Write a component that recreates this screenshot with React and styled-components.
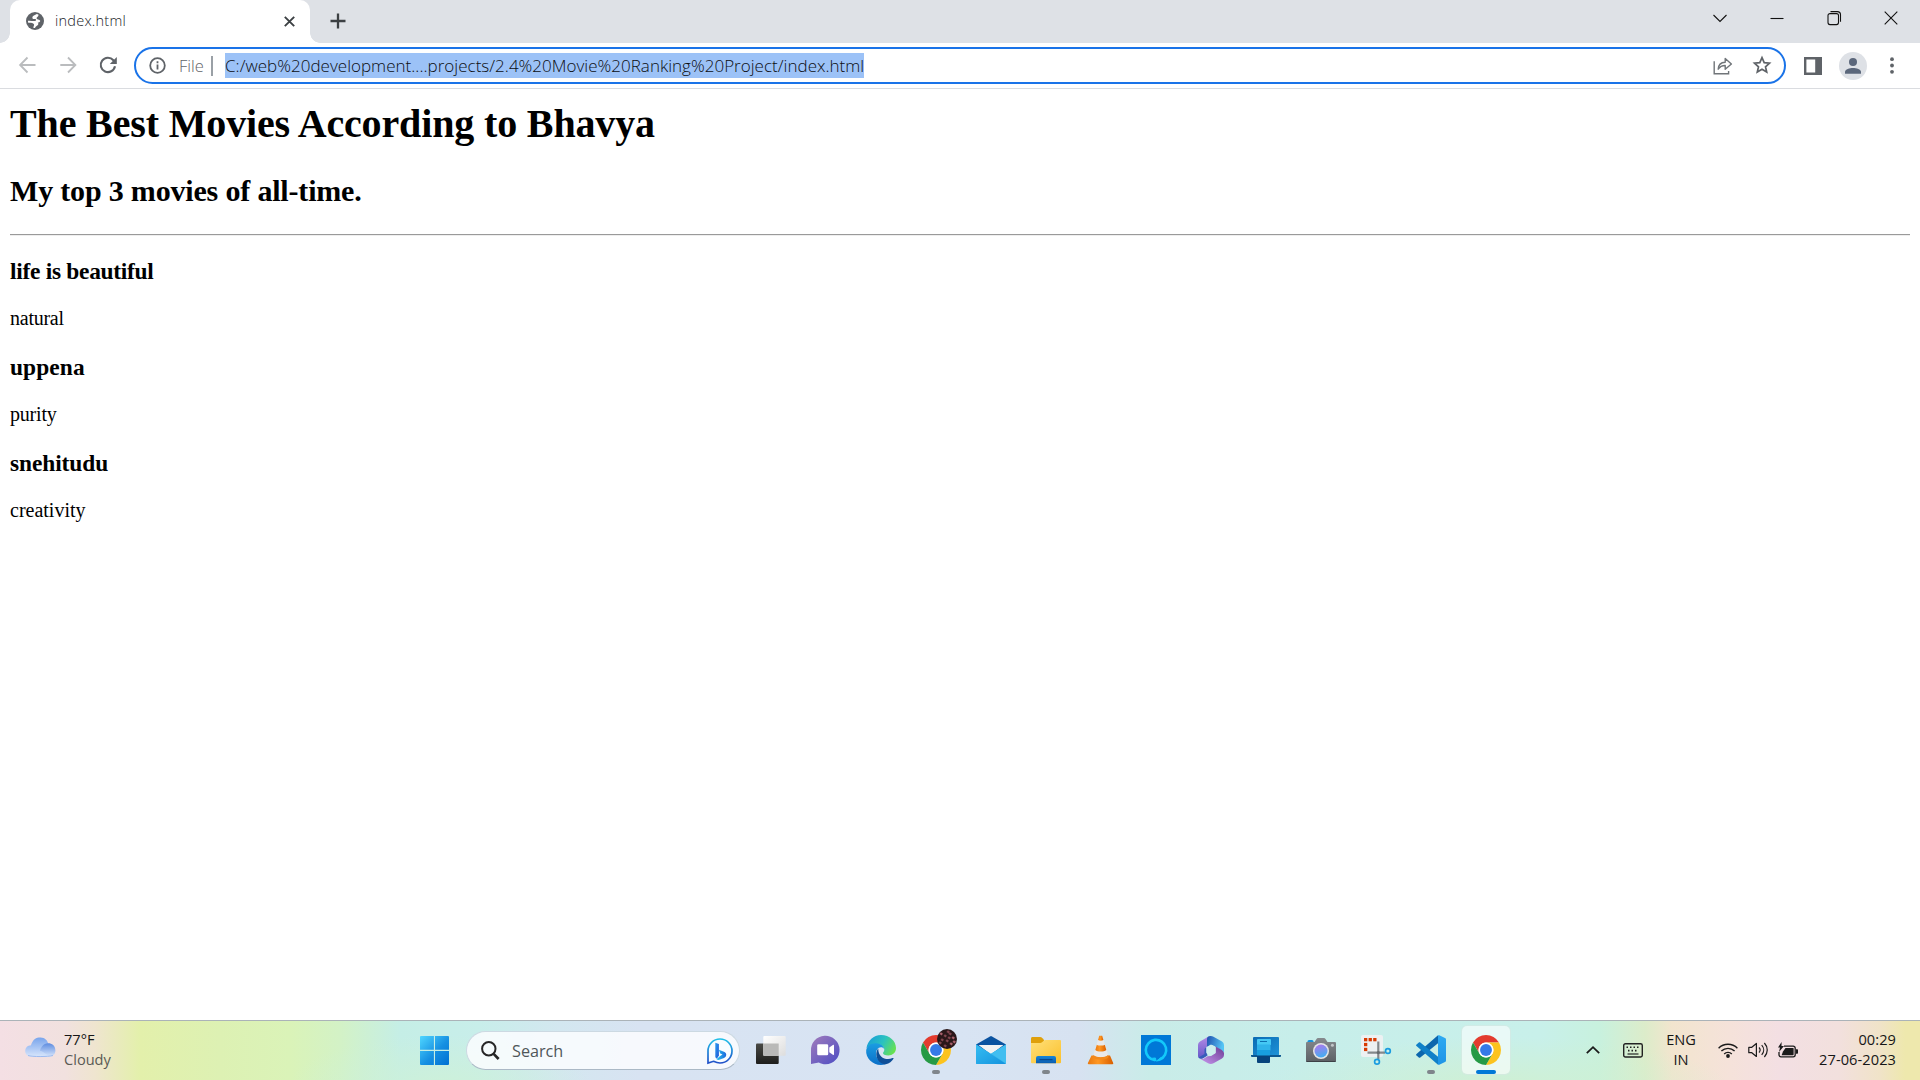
import React from "react";
import styled, { createGlobalStyle } from "styled-components";

const GlobalStyle = createGlobalStyle`
  * { box-sizing: border-box; }
  html, body { margin: 0; padding: 0; background: #fff; }
  body { overflow: hidden; }
  svg { display: block; flex: none; overflow: visible; }
`;

const UI_FONT = `"Open Sans", "Noto Sans", sans-serif`;

const Desktop = styled.div`
  width: 1920px;
  height: 1080px;
  display: flex;
  flex-direction: column;
  background: #fff;
  font-family: ${UI_FONT};
`;

/* ---------- browser chrome ---------- */

const TabStrip = styled.div`
  height: 43px;
  flex: none;
  display: flex;
  padding-left: 10px;
  background: #dee1e6;
`;

const Tab = styled.div`
  position: relative;
  width: 300px;
  height: 43px;
  display: flex;
  align-items: center;
  padding: 0 15px 1px 16px;
  background: #fff;
  border-radius: 10px 10px 0 0;
  &::before, &::after {
    content: "";
    position: absolute;
    bottom: 0;
    width: 10px;
    height: 10px;
  }
  &::before { left: -10px; background: radial-gradient(circle at 0 0, transparent 9.5px, #fff 10px); }
  &::after { right: -10px; background: radial-gradient(circle at 100% 0, transparent 9.5px, #fff 10px); }
`;

const TabTitle = styled.span`
  flex: 1;
  margin-left: 11px;
  font-size: 14.5px;
  font-weight: 300;
  line-height: 20px;
  letter-spacing: 0.24px;
  color: #202328;
`;

const NewTab = styled.div`
  display: flex;
  align-items: center;
  padding: 0 0 1px 19.5px;
`;

const WindowControls = styled.div`
  display: flex;
  margin-left: auto;
  padding-right: 1px;
  height: 36px;
`;

const WindowButton = styled.div`
  width: 57px;
  display: grid;
  place-items: center;
`;

const Toolbar = styled.div`
  height: 46px;
  flex: none;
  display: flex;
  align-items: center;
  padding: 0 18px;
  border-bottom: 1px solid #dadce0;
  background: #fff;
`;

const NavGroup = styled.div`
  display: flex;
  gap: 22.5px;
  width: 116px;
  padding-bottom: 1px;
`;

const Omnibox = styled.div`
  width: 1652px;
  height: 37px;
  display: flex;
  align-items: center;
  padding: 0 13px;
  border: 2px solid #1a73e8;
  border-radius: 19px;
  background: #fff;
`;

const Scheme = styled.span`
  width: 32px;
  margin-left: 13px;
  font-size: 16.5px;
  font-weight: 300;
  line-height: 24px;
  white-space: nowrap;
  color: #5f6368;
`;

const Divider = styled.span`
  width: 2px;
  height: 20px;
  margin-right: 12px;
  background: #9aa0a6;
`;

const Url = styled.span`
  width: 639px;
  height: 25px;
  font-size: 17px;
  font-weight: 300;
  line-height: 25px;
  letter-spacing: ${(p) => p.$track}px;
  white-space: nowrap;
  color: #0c0e12;
  background: #9cc2f7;
`;

const OmniActions = styled.div`
  display: flex;
  gap: 20px;
  margin-left: auto;
`;

const ToolbarActions = styled.div`
  display: flex;
  align-items: center;
  margin-left: 18px;
`;

const Avatar = styled.div`
  width: 28px;
  height: 28px;
  display: grid;
  place-items: center;
  margin: 0 23px 0 17px;
  border-radius: 50%;
  background: #dee1e6;
`;

/* ---------- document ---------- */

const Page = styled.main`
  flex: 1;
  padding: 12px 10px 0;
  font-family: "Liberation Serif", "Times New Roman", serif;
  color: #000;
`;

const Title = styled.h1`
  margin: 0;
  font-size: 40px;
  line-height: 46px;
  letter-spacing: -0.145px;
`;

const Subtitle = styled.h2`
  margin: 27px 0 26px;
  font-size: 30px;
  line-height: 34px;
  letter-spacing: -0.18px;
`;

const Rule = styled.hr`
  height: 2px;
  margin: 0 0 21px;
  border: 0;
  border-top: 1px solid #9a9a9a;
  border-bottom: 1px solid #eeeeee;
`;

const Movie = styled.h3`
  margin: 0 0 22px;
  font-size: 23.4px;
  line-height: 28px;
  letter-spacing: ${(p) => p.$track || 0}px;
`;

const Note = styled.p`
  margin: 0 0 23px;
  font-size: 20px;
  line-height: 23px;
  letter-spacing: ${(p) => p.$track || 0}px;
`;

/* ---------- taskbar ---------- */

const Taskbar = styled.footer`
  height: 60px;
  flex: none;
  display: flex;
  padding-top: 5px;
  border-top: 1px solid #abb3b8;
  background:
    radial-gradient(ellipse 150px 50px at 440px 64px, rgba(206, 241, 215, 0.85), rgba(206, 241, 215, 0)),
    radial-gradient(ellipse 230px 50px at 1500px 66px, rgba(208, 240, 208, 0.9), rgba(208, 240, 208, 0)),
    linear-gradient(90deg,
      #f4dfe4 0px, #f1e1df 65px, #efe5cf 95px, #e3f0ab 140px, #ddf1b3 220px, #daf3b8 290px,
      #d3f2c6 340px, #c5eee6 400px, #c8eeea 480px, #d3e7f0 560px, #d8e3f2 640px, #d8e4f3 960px,
      #d7e2f1 1080px, #c9ece8 1150px, #c7eeea 1300px, #c8f0ea 1540px, #c8f1de 1600px,
      #dcecca 1645px, #f2e5ce 1672px, #f5e2da 1730px, #f3dfe3 1780px, #f2e0dd 1840px, #f0e3c8 1880px, #eee8ad 1905px, #eee8ad 1920px);
`;

const Weather = styled.div`
  width: 411px;
  display: flex;
  padding: 0 0 0 25px;
  gap: 8px;
`;

const WeatherIcon = styled.div`
  padding-top: 11px;
`;

const StackText = styled.div`
  display: flex;
  flex-direction: column;
  align-items: ${(p) => p.$align || "flex-start"};
  padding-top: 3px;
  font-size: 14.6px;
  line-height: 20px;
  letter-spacing: ${(p) => p.$track || 0}px;
  color: #161616;
  white-space: nowrap;
`;

const Muted = styled.span`
  color: #5b5b55;
`;

const AppRow = styled.div`
  display: flex;
  gap: 7px;
`;

const Slot = styled.div`
  position: relative;
  width: 48px;
  height: 48px;
  display: grid;
  place-items: center;
  border-radius: 5px;
  background: ${(p) => (p.$active ? "rgba(255,255,255,0.6)" : "transparent")};
  box-shadow: ${(p) => (p.$active ? "0 0 0 1px rgba(215,232,226,0.6)" : "none")};
  &::after {
    content: "";
    position: absolute;
    bottom: 0;
    left: 50%;
    width: ${(p) => (p.$active ? 20 : 8)}px;
    height: 4px;
    transform: translateX(-50%);
    border-radius: 2px;
    background: ${(p) => (p.$active ? "#0078d7" : p.$running ? "#7f858b" : "transparent")};
  }
`;

const SearchBox = styled.div`
  width: 274px;
  height: 39px;
  display: flex;
  align-items: center;
  margin-top: 5px;
  padding: 0 6px 0 14px;
  border: 1px solid #ccd9e2;
  border-bottom-color: #abb9c6;
  border-radius: 20px;
  background: rgba(251, 253, 255, 0.86);
`;

const SearchLabel = styled.span`
  flex: 1;
  margin-left: 12px;
  font-size: 16.2px;
  line-height: 24px;
  color: #4f5659;
`;

const Tray = styled.div`
  display: flex;
  margin-left: auto;
  padding-right: 24px;
`;

const TrayIcon = styled.div`
  width: ${(p) => p.$w}px;
  height: 48px;
  display: grid;
  place-items: center;
`;

const Lang = styled.div`
  width: 56px;
  display: flex;
  justify-content: center;
`;

const Clock = styled.div`
  width: 89px;
  display: flex;
  justify-content: flex-end;
`;

/* ---------- icons ---------- */

const Icon30 = ({ children }) => (
  <svg width="30" height="30" viewBox="0 0 30 30" fill="none">{children}</svg>
);

const Grad = ({ id, from, to, x2 = 1, y2 = 1 }) => (
  <linearGradient id={id} x1="0" y1="0" x2={x2} y2={y2}>
    <stop stopColor={from} />
    <stop offset="1" stopColor={to} />
  </linearGradient>
);

const Globe = () => (
  <svg width="18" height="18" viewBox="0 0 18 18">
    <circle cx="9" cy="9" r="9" fill="#5f6368" />
    <path d="M10.800 2.100c-1.800 1.100-4.300 1.500-4.500 3.600-.1 1.500 1.700 1.200 2.800 1.300 1.500.2 1.200 1.700.1 2-1.700.3-4.200-.5-7.200-.3a7.100 7.100 0 0 0 .2 2c2.400-.2 4.700.1 5.600 1.300.8 1.200-.3 2-.5 3.800.5.200 1.200.3 1.700.3.700-1.600 1.200-2.100 2.300-2.600 1.400-.7 1.300-1.900.4-2.900 1.400-.1 2.700-.6 2.500-1.800-.2-1.300-2.100-1.100-3.200-1.900-.8-.7-.3-1.600.6-2.200.7-.5 1-1.300.800-2.200a6 6 0 0 0-1.600-.4z" fill="#fff" />
  </svg>
);

const TabClose = () => (
  <svg width="11" height="11" viewBox="0 0 11 11" stroke="#3c4043" strokeWidth="1.900">
    <path d="M.8.8l9.400 9.400M10.200.8L.8 10.200" />
  </svg>
);

const Plus = () => (
  <svg width="16" height="16" viewBox="0 0 16 16" stroke="#3c4043" strokeWidth="2.300">
    <path d="M8 .5v15M.5 8h15" />
  </svg>
);

const Arrow = ({ flip }) => (
  <svg width="18" height="18" viewBox="0 0 18 18" fill="none" stroke="#babcbe" strokeWidth="1.800">
    <path d={flip ? "M1.300 9h15M9 1.500L16.400 9 9 16.500" : "M17.500 9H2.500M9.500 1.500L2.100 9 9.500 16.500"} />
  </svg>
);

const Reload = () => (
  <svg width="18" height="18" viewBox="0 0 18 18" fill="none" stroke="#5f6368" strokeWidth="2.100">
    <path d="M16 10.300A7.200 7.200 0 1 1 14.400 4.200L16 5.800" />
    <path d="M17.800 1v7h-7z" fill="#5f6368" stroke="none" />
  </svg>
);

const Info = () => (
  <svg width="17" height="17" viewBox="0 0 17 17" fill="none" stroke="#5f6368" strokeWidth="1.800">
    <circle cx="8.500" cy="8.500" r="7.300" />
    <path d="M8.500 7.600v5M8.500 4.300v1.900" />
  </svg>
);

const Share = () => (
  <svg width="20" height="19" viewBox="0 0 20 19" fill="none" stroke="#707579" strokeWidth="1.400">
    <path d="M1.200 5.200v12.600h14.400V15" />
    <path d="M5.200 13.200c.2-4.400 2.800-6.700 7-6.900V2.400L18.400 8l-6.200 5.300V9.500c-3.200 0-5.200.9-7 3.700z" strokeLinejoin="round" />
  </svg>
);

const Star = () => (
  <svg width="18" height="18" viewBox="0 0 18 18" fill="none" stroke="#5f6368" strokeWidth="1.700">
    <path d="M9 1.700l2.200 5 5.300.5-4 3.600 1.200 5.300L9 13.300l-4.700 2.800 1.200-5.300-4-3.600 5.300-.5z" />
  </svg>
);

const SidePanel = () => (
  <svg width="18" height="18" viewBox="0 0 18 18">
    <rect width="18" height="18" fill="#5f6368" />
    <rect x="2.400" y="2.500" width="8.800" height="13" fill="#fff" />
  </svg>
);

const Person = () => (
  <svg width="16" height="16" viewBox="0 0 16 16" fill="#5b677b">
    <circle cx="8" cy="4" r="4" />
    <path d="M0 15.700v-1.600C0 11.300 4.600 10 8 10s8 1.300 8 4.100v1.600z" />
  </svg>
);

const Kebab = () => (
  <svg width="4" height="17" viewBox="0 0 4 17" fill="#5f6368">
    <circle cx="2" cy="2.200" r="1.900" />
    <circle cx="2" cy="8.500" r="1.900" />
    <circle cx="2" cy="14.800" r="1.900" />
  </svg>
);

const WinGlyph = ({ d }) => (
  <svg width="14" height="14" viewBox="0 0 14 14" fill="none" stroke="#111" strokeWidth="1.100">
    <path d={d} />
  </svg>
);

const Cloud = () => (
  <svg width="31" height="20" viewBox="0 0 31 20">
    <defs>
      <Grad id="cl1" from="#78a4ec" to="#d2e1fa" x2={0} />
      <Grad id="cl2" from="#5f8de0" to="#d7e5fb" x2={0} />
      <Grad id="cl3" from="#9dbdf2" to="#d7e5fb" x2={0} />
    </defs>
    <path d="M6 8C8 2 11 .4 15.500.4c4.500 0 7.500 3 8 8V19H6z" fill="url(#cl1)" />
    <path d="M15 19c-1-3 0-7 2-9.500 4-5.500 13.400-3.500 13.400 4 0 3.500-2.400 6-5.900 6z" fill="url(#cl2)" />
    <path d="M6 19.500c-7.600 0-7.800-11.200.2-11.300 4.300 0 7.200 2 8.800 5.500 2 .3 5 2.500 9.500 5.800z" fill="url(#cl3)" />
    <path d="M3 18.500c4 1.400 20 1.400 25 0" stroke="#9dbbf0" fill="none" />
  </svg>
);

const WindowsLogo = () => (
  <Icon30>
    <defs><linearGradient id="win" gradientUnits="userSpaceOnUse" x1="0" y1="1" x2="29" y2="30"><stop stopColor="#4fd6ff" /><stop offset=".55" stopColor="#1690e2" /><stop offset="1" stopColor="#0070d2" /></linearGradient></defs>
    <path d="M1 1h12.900v13.800H0V2a1 1 0 0 1 1-1zM15 1h13a1 1 0 0 1 1 1v12.800H15zM0 16h13.900v14H1a1 1 0 0 1-1-1zM15 16h14v13a1 1 0 0 1-1 1H15z" fill="url(#win)" />
  </Icon30>
);

const Magnifier = () => (
  <svg width="19" height="19" viewBox="0 0 19 19" fill="none" stroke="#262626">
    <circle cx="7.800" cy="7.800" r="6.700" strokeWidth="2" />
    <path d="M12.600 12.800l5 5.200" strokeWidth="2.600" />
  </svg>
);

const Bing = () => (
  <svg width="26" height="26" viewBox="0 0 26 26" fill="none">
    <defs>
      <linearGradient id="bi1" x1="0" y1="0" x2="0" y2="1"><stop stopColor="#20c0e8" /><stop offset="1" stopColor="#204fc8" /></linearGradient>
      <Grad id="bi2" from="#2b9cf0" to="#1b54d4" />
      <Grad id="bi3" from="#25c6ee" to="#1c64dd" y2={0} />
    </defs>
    <path d="M1 25V13A12 12 0 1 1 13 25c-2.500 0-4.600-.8-6.500-1.700z" fill="#f8fcff" stroke="url(#bi1)" strokeWidth="1.700" />
    <path d="M8.300 4.800l3.600 1.300v11.500l-2 3.200-1.600-1.500z" fill="url(#bi2)" />
    <path d="M9.500 21.200l3.700-3.200 2.300-1.500-2.300-1.100-1.300-3.600 5.600 2.300c3 1.800 1.700 5-.5 6l-4 1.500c-1.500.5-2.700.3-3.500-.4z" fill="url(#bi3)" />
  </svg>
);

const TaskView = () => (
  <Icon30>
    <defs><Grad id="tv1" from="#494945" to="#1e1e1c" x2={0} /><Grad id="tv2" from="#ffffff" to="#dddddd" /></defs>
    <rect x="0" y="8.500" width="22.700" height="20.500" rx="1" fill="url(#tv1)" />
    <rect x="7.300" y="1" width="22.400" height="19.700" rx="1" fill="url(#tv2)" />
    <rect x="7.300" y="8.500" width="15.400" height="12.200" fill="#b9b9b8" />
  </Icon30>
);

const Chat = () => (
  <Icon30>
    <defs><Grad id="ch" from="#a27cbb" to="#4c4dc4" /></defs>
    <path d="M0 29V16A14.300 14.300 0 1 1 14.700 29.300c-2.700 0-4.900-.6-6.900-1.800L0 29z" fill="url(#ch)" />
    <rect x="6.200" y="9.300" width="11" height="11" rx="1.300" fill="#fff" />
    <path d="M18.300 12.500l3.600-2.600c.8-.5 1.100 0 1.100.6v8.700c0 .7-.4 1-1.100.6l-3.600-2.600z" fill="#fff" />
  </Icon30>
);

const Edge = () => (
  <Icon30>
    <defs>
      <linearGradient id="ed1" x1="0" y1=".3" x2="1" y2=".7"><stop stopColor="#1a9fd8" /><stop offset=".5" stopColor="#2bc2c0" /><stop offset="1" stopColor="#6be34a" /></linearGradient>
      <Grad id="ed2" from="#1b9de2" to="#0b6fc8" x2={0} />
      <Grad id="ed3" from="#0d4f94" to="#104f9a" />
    </defs>
    <path d="M.4 13.500C1.700 5.400 7.500 0 15 0c8.600 0 15 6.100 15 13 0 4.700-3.600 7.500-7.700 7.500-3.400 0-5.300-1.200-5.300-2.400 0-.7 1.300-1.300 1.300-3.500 0-3.100-3.300-5.700-7.600-5.700C6 8.900 2.100 11.300.4 13.500z" fill="url(#ed1)" />
    <path d="M.2 15C1 10.800 5.300 7.800 10.300 8.200c4.800.4 7.700 3.200 8 6-1.700-2.700-5.300-2.400-7.200.2-2.700 3.800-.6 10.200 4.700 13.100l3.800 1.700C9.500 32.500-.8 24.500.2 15z" fill="url(#ed2)" />
    <path d="M12.300 13.400c-4.700 5.400-.6 15.900 7.500 15.800 3.500-.7 6.200-3 7.700-5.500.4-.8-.2-1-1-.6-6 2.700-14.500-.3-14.200-9.700z" fill="url(#ed3)" />
  </Icon30>
);

const ChromeMark = () => (
  <g transform="scale(.625)">
    <path d="M24 12H44.780A24 24 0 0 0 3.220 12L13.610 30A12 12 0 0 1 24 12z" fill="#e33b2e" />
    <path d="M44.780 12H24A12 12 0 0 1 34.390 30L24 48A24 24 0 0 0 44.780 12z" fill="#fcc31e" />
    <path d="M13.610 30L3.220 12A24 24 0 0 0 24 48L34.390 30A12 12 0 0 1 13.610 30z" fill="#269a45" />
    <circle cx="24" cy="24" r="12" fill="#fff" />
    <circle cx="24" cy="24" r="9.500" fill="#357ae8" />
  </g>
);

const BLOSSOMS = [[20, -1], [24, 1], [29, -1], [32, 3], [21, 5], [26, 6], [30, 9], [24, 11], [19, 8], [33, 7], [27, -3], [28, 3]];

const Chrome = ({ profile }) => (
  <Icon30>
    <ChromeMark />
    {profile && (
      <g>
        <circle cx="26" cy="4" r="10" fill="#2a1719" />
        {BLOSSOMS.map(([x, y], i) => (
          <path key={i} d={`M${x - 1.6} ${y}l1.500-1.700 1.900 1.100-.9 2.100z`} fill={i % 3 ? "#80454f" : "#a8606b"} />
        ))}
      </g>
    )}
  </Icon30>
);

const Mail = () => (
  <Icon30>
    <defs><Grad id="ma1" from="#35bdf2" to="#1593de" /></defs>
    <path d="M0 9.500L14 1.400a2 2 0 0 1 2 0L30 9.500v9H0z" fill="#0b53a0" />
    <path d="M2.500 10h25L15 19.500z" fill="#f3f3f3" />
    <path d="M0 9.500l15 9.200 15-9.200V28a1 1 0 0 1-1 1H1a1 1 0 0 1-1-1z" fill="#2badea" />
    <path d="M0 9.500L30 29H1a1 1 0 0 1-1-1z" fill="url(#ma1)" />
    <path d="M15 18.700l15-9.200V28.500z" fill="#42bef0" />
  </Icon30>
);

const Explorer = () => (
  <Icon30>
    <defs><Grad id="fo1" from="#ffe07a" to="#fbc02c" /><Grad id="fo2" from="#1685d8" to="#0b5caf" x2={0} /></defs>
    <path d="M1.500 2h7.500c1 0 1.700.4 2.500 1.200L13 5v6H0V3.500C0 2.600.6 2 1.500 2z" fill="#dfa00c" />
    <path d="M0 8h8.500c1.200 0 2-.3 2.800-1L13 5.600c.4-.4.9-.6 1.500-.6H29a1 1 0 0 1 1 1v21.300a1 1 0 0 1-1 1H1a1 1 0 0 1-1-1z" fill="url(#fo1)" />
    <path d="M5 28.300V23a2 2 0 0 1 2-2h16a2 2 0 0 1 2 2v5.300z" fill="url(#fo2)" />
    <rect x="8.500" y="24.200" width="13" height="1" fill="#083f80" />
  </Icon30>
);

const Vlc = () => (
  <Icon30>
    <defs><linearGradient id="vl" x1="0" x2="1" y1="0" y2="0"><stop stopColor="#e87810" /><stop offset=".4" stopColor="#ff9822" /><stop offset="1" stopColor="#d95f00" /></linearGradient></defs>
    <path d="M5.500 20.500h18.500l3.200 7.500a.8.800 0 0 1-.8 1.200H2.700a.8.800 0 0 1-.8-1.200z" fill="url(#vl)" />
    <path d="M13 1.300h3.400L22 20c-1.200 3.200-13.200 3.200-14.500 0z" fill="#e9e9e9" />
    <path d="M13.200.8h3l1.200 4.200c-1.500.9-3.900.9-5.300 0z" fill="url(#vl)" />
    <path d="M10.800 9.700c2 1.200 6 1.200 8 0l1.500 5.200c-2.500 2.100-8.600 2.100-11 0z" fill="url(#vl)" />
    <path d="M7.600 20l-.6 2.200c1.500 3.200 13.800 3.200 15.500 0L22 20c-2.500 3-12 3-14.400 0z" fill="#f28a1c" />
  </Icon30>
);

const Alexa = () => (
  <Icon30>
    <rect width="30" height="30" fill="#0078d7" />
    <path d="M14.200 25.200C8.600 24.700 4.800 20.200 4.800 15a10.200 10.200 0 1 1 14 9.500" stroke="#13c9fa" strokeWidth="2.600" />
    <path d="M11.600 23.200L15 26l-.5-3zM20.500 22.200L15.500 26l3.300-.6z" fill="#13c9fa" stroke="#13c9fa" />
  </Icon30>
);

const Office = () => (
  <Icon30>
    <defs>
      <linearGradient id="of1" x1="0" y1="0" x2="0" y2="1"><stop stopColor="#b58be6" /><stop offset="1" stopColor="#6256c8" /></linearGradient>
      <Grad id="of2" from="#1e4fae" to="#55c4f5" y2={0.3} />
      <linearGradient id="of3" x1="1" y1="0" x2="0" y2="1"><stop stopColor="#6d3a95" /><stop offset="1" stopColor="#c99af0" /></linearGradient>
    </defs>
    <path d="M12.500 1.500L4 6.500a4 4 0 0 0-2 3.500v11c0 2.500 3 3.500 5 2.300l3.500-2.300v-7.600c0-1.500.5-2.500 2-3.300l2.500-1.500V1c-.9 0-1.700 0-2.500.5z" fill="url(#of1)" />
    <path d="M12 1.800c1.500-1 3.800-1 5.500 0L26 6.500a4 4 0 0 1 2 3.500v8.500c-.3-1.700-1.100-2.400-2.500-3.200l-6-3.500c-1.500-1-3-1.700-4.500-1.700L11 12V4.500c0-1 .2-2 1-2.700z" fill="url(#of2)" />
    <path d="M28 14.500V20a4 4 0 0 1-2 3.500L17.500 28.300c-1.800 1-3.700 1-5.500 0L4 23.800c1.500.5 2.700.3 4-.4l3.500-2.200 3.500-.2 4.500-2.800V11.500l5.500 3c1.500.8 2.500 2 3 3.500z" fill="url(#of3)" />
    <path d="M2.500 22.500c1 1.200 3 1.300 4.700.6l4.500-2.900-1.200-2V12l-2 2v5z" fill="#365cba" />
    <path d="M15 9.600l4.700 2.700v5.400L15 20.400l-4.700-2.700v-5.400z" fill="#cceeed" />
  </Icon30>
);

const PhoneLink = () => (
  <Icon30>
    <defs><Grad id="pl1" from="#0a6bb3" to="#1e92d8" /></defs>
    <rect x="2" y="2" width="26" height="18.500" rx="1" fill="url(#pl1)" />
    <path d="M0 20h30v1a1 1 0 0 1-1 1H1a1 1 0 0 1-1-1z" fill="#0c5791" />
    <path d="M7 4h12a1 1 0 0 1 1 1v5H6V5a1 1 0 0 1 1-1z" fill="#45c8f4" />
    <path d="M6 9.500h13.500v6H6z" fill="#2fb3ea" />
    <path d="M6 15h13v6H6z" fill="#189fdf" />
    <path d="M6 20.500h13V27a1 1 0 0 1-1 1H7a1 1 0 0 1-1-1z" fill="#07447d" />
    <path d="M9 6.500h7" stroke="#0d70b0" />
  </Icon30>
);

const Camera = () => (
  <Icon30>
    <defs><Grad id="ca1" from="#868a8e" to="#5c6065" x2={0} /><Grad id="ca2" from="#b574ec" to="#48abf2" x2={0.3} /></defs>
    <rect x="1.500" y="5" width="6" height="4" rx="1.500" fill="#1793dc" />
    <path d="M1 7h7.500l2-3c.4-.6.9-.9 1.500-.9h6c.6 0 1.100.3 1.500.9l2 3H29a1 1 0 0 1 1 1v18a1 1 0 0 1-1 1H1a1 1 0 0 1-1-1V8a1 1 0 0 1 1-1z" fill="url(#ca1)" />
    <path d="M.5 26.500h29" stroke="#3d4146" />
    <circle cx="15" cy="16" r="8" fill="#e4e5e6" />
    <circle cx="15" cy="16" r="6.500" fill="url(#ca2)" />
    <circle cx="26.400" cy="10.300" r="1.500" fill="#c3c6c9" />
  </Icon30>
);

const SNIP_DASHES = [[3, 3], [7.6, 3], [12.2, 3], [3, 7.9], [3, 12.8]];

const Snip = () => (
  <Icon30>
    <rect width="22" height="22" rx="2" fill="#edf1f2" />
    {SNIP_DASHES.map(([x, y]) => (
      <rect key={`${x}-${y}`} x={x} y={y} width="3.300" height="3.300" fill="#d83b01" />
    ))}
    <path d="M17.300 6.500V24M6.500 17.600H24" stroke="#84898c" strokeWidth="2.200" />
    <circle cx="17.300" cy="17.600" r="1.600" fill="#666b6e" />
    <circle cx="26.900" cy="16" r="2.400" stroke="#1b9ce0" strokeWidth="1.700" />
    <circle cx="16" cy="26.800" r="2.400" stroke="#1b9ce0" strokeWidth="1.700" />
  </Icon30>
);

const VsCode = () => (
  <Icon30>
    <defs><Grad id="vs" from="#2eaaf2" to="#1d94e6" x2={0} /></defs>
    <path d="M22 .3v7.900L4.300 22.500c-.5.4-1 .4-1.500 0L.5 20.600c-.6-.6-.6-1.200 0-1.700z" fill="#0c66ad" />
    <path d="M22 29.700v-7.900L4.300 7.500c-.5-.4-1-.4-1.500 0L.5 9.400c-.6.6-.6 1.200 0 1.700z" fill="#1080c8" />
    <path d="M22 .3c.4-.2.8-.2 1.300 0l5.700 2.800c.7.3 1 .8 1 1.500v20.800c0 .7-.3 1.200-1 1.500l-5.700 2.800c-.5.2-.9.2-1.300 0z" fill="url(#vs)" />
  </Icon30>
);

const Caret = () => (
  <svg width="14" height="8" viewBox="0 0 14 8" fill="none" stroke="#1b1b1b" strokeWidth="1.800"><path d="M.8 7.200L7 1.200l6.200 6" /></svg>
);

const Keyboard = () => (
  <svg width="20" height="15" viewBox="0 0 20 15" fill="none" stroke="#222">
    <rect x=".7" y=".7" width="18.600" height="13.300" rx="1.700" strokeWidth="1.400" />
    <path d="M3.500 4.300H16.500M5 7.600H15.500" strokeWidth="1.600" strokeDasharray="1.500 2" />
    <path d="M4.500 11h11" strokeWidth="1.200" />
  </svg>
);

const Wifi = () => (
  <svg width="20" height="15" viewBox="0 0 20 15" fill="none" stroke="#1b1b1b" strokeWidth="1.400">
    <path d="M.6 5.200a13.300 13.300 0 0 1 18.800 0M3.400 8.100a9.300 9.300 0 0 1 13.200 0M6.200 10.900a5.400 5.400 0 0 1 7.600 0" />
    <circle cx="10" cy="13" r="1.900" fill="#1b1b1b" stroke="none" />
  </svg>
);

const Speaker = () => (
  <svg width="20" height="16" viewBox="0 0 20 16" fill="none" stroke="#1b1b1b" strokeWidth="1.200">
    <path d="M.8 5.300h3L8.400 1.500v13L3.800 10.700h-3z" strokeLinejoin="round" />
    <path d="M11 5.500c1.300 1.400 1.300 3.600 0 5M13.700 3.200c2.600 2.800 2.600 6.800 0 9.600M16.400 1c3.800 4.200 3.800 9.800 0 14" />
  </svg>
);

const Battery = () => (
  <svg width="20" height="16" viewBox="0 0 20 16">
    <path d="M6 4.200h9.200a2 2 0 0 1 2 2v6.600a2 2 0 0 1-2 2H3a2 2 0 0 1-2-2V10" fill="none" stroke="#1b1b1b" strokeWidth="1.300" />
    <path d="M7.500 6H15a.6.600 0 0 1 .6.600v6a.6.600 0 0 1-.6.600H3.600L5 9.500z" fill="#1b1b1b" />
    <path d="M18 7.300h1.300a.7.700 0 0 1 .7.700v3a.7.700 0 0 1-.7.700H18zM3.600 0L0 5.500h2L1 10l5-6H3.500z" fill="#1b1b1b" />
  </svg>
);

const APPS = [
  { id: "taskview", icon: <TaskView /> },
  { id: "chat", icon: <Chat /> },
  { id: "edge", icon: <Edge /> },
  { id: "chrome-profile", icon: <Chrome profile />, running: true },
  { id: "mail", icon: <Mail /> },
  { id: "explorer", icon: <Explorer />, running: true },
  { id: "vlc", icon: <Vlc /> },
  { id: "alexa", icon: <Alexa /> },
  { id: "office", icon: <Office /> },
  { id: "phonelink", icon: <PhoneLink /> },
  { id: "camera", icon: <Camera /> },
  { id: "snip", icon: <Snip /> },
  { id: "vscode", icon: <VsCode />, running: true },
  { id: "chrome", icon: <Chrome />, active: true },
];

const MOVIES = [
  { title: "life is beautiful", note: "natural", track: -0.27, noteTrack: -0.25 },
  { title: "uppena", note: "purity", track: 0.1, noteTrack: -0.2 },
  { title: "snehitudu", note: "creativity", track: -0.08 },
];

export default function App() {
  return (
    <Desktop>
      <GlobalStyle />
      <TabStrip>
        <Tab>
          <Globe />
          <TabTitle>index.html</TabTitle>
          <TabClose />
        </Tab>
        <NewTab><Plus /></NewTab>
        <WindowControls>
          <WindowButton><WinGlyph d="M.5 4L7 10.500 13.500 4" /></WindowButton>
          <WindowButton><WinGlyph d="M.5 7.500h13" /></WindowButton>
          <WindowButton><WinGlyph d="M3 2.600h6.500a2 2 0 0 1 2 2v7a2 2 0 0 1-2 2H3a2 2 0 0 1-2-2v-7a2 2 0 0 1 2-2zM3.500.6h6.800a3.200 3.200 0 0 1 3.200 3.200v7" /></WindowButton>
          <WindowButton><WinGlyph d="M.7.7l12.600 12.600M13.300.7L.7 13.300" /></WindowButton>
        </WindowControls>
      </TabStrip>
      <Toolbar>
        <NavGroup>
          <Arrow />
          <Arrow flip />
          <Reload />
        </NavGroup>
        <Omnibox>
          <Info />
          <Scheme>File</Scheme>
          <Divider />
          <Url $track={0.02}>C:/web%20development....projects/2.4%20Movie%20Ranking%20Project/index.html</Url>
          <OmniActions>
            <Share />
            <Star />
          </OmniActions>
        </Omnibox>
        <ToolbarActions>
          <SidePanel />
          <Avatar><Person /></Avatar>
          <Kebab />
        </ToolbarActions>
      </Toolbar>
      <Page>
        <Title>The Best Movies According to Bhavya</Title>
        <Subtitle>My top 3 movies of all-time.</Subtitle>
        <Rule />
        {MOVIES.map((m) => (
          <React.Fragment key={m.title}>
            <Movie $track={m.track}>{m.title}</Movie>
            <Note $track={m.noteTrack}>{m.note}</Note>
          </React.Fragment>
        ))}
      </Page>
      <Taskbar>
        <Weather>
          <WeatherIcon><Cloud /></WeatherIcon>
          <StackText>
            <span>77°F</span>
            <Muted>Cloudy</Muted>
          </StackText>
        </Weather>
        <AppRow>
          <Slot><WindowsLogo /></Slot>
          <SearchBox>
            <Magnifier />
            <SearchLabel>Search</SearchLabel>
            <Bing />
          </SearchBox>
          {APPS.map((a) => (
            <Slot key={a.id} $running={a.running} $active={a.active}>{a.icon}</Slot>
          ))}
        </AppRow>
        <Tray>
          <TrayIcon $w={40}><Caret /></TrayIcon>
          <TrayIcon $w={40}><Keyboard /></TrayIcon>
          <Lang><StackText $align="center"><span>ENG</span><span>IN</span></StackText></Lang>
          <TrayIcon $w={38}><Wifi /></TrayIcon>
          <TrayIcon $w={22}><Speaker /></TrayIcon>
          <TrayIcon $w={38}><Battery /></TrayIcon>
          <Clock><StackText $align="flex-end" $track={0.08}><span>00:29</span><span>27-06-2023</span></StackText></Clock>
        </Tray>
      </Taskbar>
    </Desktop>
  );
}
